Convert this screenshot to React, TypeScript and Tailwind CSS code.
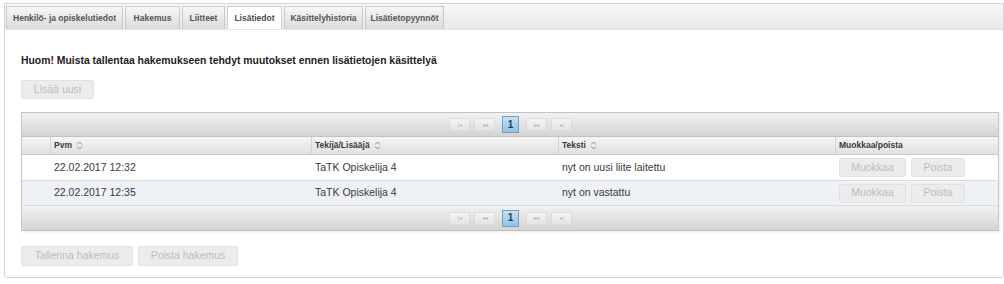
import React from "react";

const SortIcon = () => (
  <svg width="7" height="9" viewBox="0 0 7 9" className="inline-block ml-[4px] -mt-[1px] align-middle">
    <path d="M1 3.5 L3.5 1 L6 3.5" fill="none" stroke="#8a8a8a" strokeWidth="1" />
    <path d="M1 5.5 L3.5 8 L6 5.5" fill="none" stroke="#8a8a8a" strokeWidth="1" />
  </svg>
);

const PagerBtn = ({ label }: { label: string }) => (
  <div className="w-[21px] h-[13px] border border-[#dcdcdc] bg-gradient-to-b from-[#f4f4f4] to-[#e4e4e4] flex items-center justify-center text-[6px] leading-none text-[#bdbdbd] tracking-[-0.5px]">
    {label}
  </div>
);

const Pager = ({ border }: { border: string }) => (
  <div className={`h-[25px] bg-gradient-to-b from-[#f1f1f1] via-[#e3e3e3] to-[#d4d4d4] ${border} border-[#c2c2c2] flex items-center justify-center`}>
    <div className="flex items-center gap-[4px] ml-[1px]">
      <PagerBtn label="|◂" />
      <PagerBtn label="◂◂" />
      <div className="mx-[3px] w-[17px] h-[17px] border border-[#6f9fc4] bg-gradient-to-b from-[#c6e0f2] to-[#95c3e2] flex items-center justify-center text-[10px] font-bold text-[#1d3d5e] leading-none">
        1
      </div>
      <PagerBtn label="▸▸" />
      <PagerBtn label="▸|" />
    </div>
  </div>
);

const DisabledBtn = ({ label, w }: { label: string; w: string }) => (
  <div className={`${w} h-[19px] rounded-[2px] border border-[#e2e2e2] bg-[#ececec] text-[#bdbdbd] text-[10.5px] flex items-center justify-center`}>
    {label}
  </div>
);

const rows = [
  { pvm: "22.02.2017 12:32", tekija: "TaTK Opiskelija 4", teksti: "nyt on uusi liite laitettu", bg: "bg-white" },
  { pvm: "22.02.2017 12:35", tekija: "TaTK Opiskelija 4", teksti: "nyt on vastattu", bg: "bg-[#eef2f7]" },
];

const tabs = [
  { label: "Henkilö- ja opiskelutiedot", w: "w-[117px]" },
  { label: "Hakemus", w: "w-[55px]" },
  { label: "Liitteet", w: "w-[43px]" },
  { label: "Lisätiedot", w: "w-[55px]", active: true },
  { label: "Käsittelyhistoria", w: "w-[79px]" },
  { label: "Lisätietopyynnöt", w: "w-[79px]" },
];

export default function App() {
  return (
    <div className="w-[1004px] h-[284px] bg-white pt-[3px] pl-[4px] font-['Liberation_Sans',Arial,sans-serif] overflow-hidden">
      <div className="w-[1000px] h-[275px] border border-[#d2d2d2] rounded-b-[3px] flex flex-col">
        {/* tab bar */}
        <div className="h-[26px] bg-gradient-to-b from-[#f7f7f7] to-[#e9e9e9] border-b border-[#e4e4e4] flex items-end pl-[1px] gap-[2px]">
          {tabs.map((t) => (
            <div
              key={t.label}
              className={`${t.w} h-[23px] border border-b-0 ${
                t.active
                  ? "bg-white border-[#d0d0d0] text-[#4d4d4d]"
                  : "bg-gradient-to-b from-[#f7f7f7] to-[#dadada] border-[#c9c9c9] text-[#555]"
              } flex items-center justify-center text-[8.5px] font-bold whitespace-nowrap`}
            >
              {t.label}
            </div>
          ))}
        </div>

        <div className="pl-[16px] pr-[4px]">
          <div className="mt-[25px] h-[12px] text-[10.4px] leading-[12px] font-bold text-[#222] whitespace-nowrap">
            Huom! Muista tallentaa hakemukseen tehdyt muutokset ennen lisätietojen käsittelyä
          </div>
          <div className="mt-[13px]">
            <DisabledBtn label="Lisää uusi" w="w-[73px]" />
          </div>

          {/* table */}
          <div className="mt-[13px] w-[978px] border-x border-[#c8c8c8] shadow-[1px_1px_2px_rgba(0,0,0,0.08)]">
            <Pager border="border-y" />
            <div className="grid grid-cols-[29px_261px_247px_277px_1fr] h-[18px] bg-gradient-to-b from-[#f5f5f5] to-[#e1e1e1] border-b border-[#cbcbcb] text-[8.5px] font-bold text-[#3a3a3a]">
              <div className="border-r border-[#d2d2d2]" />
              <div className="border-r border-[#d2d2d2] flex items-center pl-[3px]">Pvm<SortIcon /></div>
              <div className="border-r border-[#d2d2d2] flex items-center pl-[3px]">Tekijä/Lisääjä<SortIcon /></div>
              <div className="border-r border-[#d2d2d2] flex items-center pl-[3px]">Teksti<SortIcon /></div>
              <div className="flex items-center pl-[3px]">Muokkaa/poista</div>
            </div>
            {rows.map((r, i) => (
              <div
                key={i}
                className={`grid grid-cols-[29px_261px_247px_277px_1fr] ${i === 0 ? "h-[26px]" : "h-[25px]"} ${r.bg} border-b border-[#dcdcdc] text-[10.5px] text-[#3a3a3a]`}
              >
                <div />
                <div className="flex items-center pl-[3px]">{r.pvm}</div>
                <div className="flex items-center pl-[3px]">{r.tekija}</div>
                <div className="flex items-center pl-[3px]">{r.teksti}</div>
                <div className="flex items-center pl-[3px] gap-[5px]">
                  <DisabledBtn label="Muokkaa" w="w-[67px]" />
                  <DisabledBtn label="Poista" w="w-[54px]" />
                </div>
              </div>
            ))}
            <Pager border="border-b" />
          </div>

          <div className="mt-[15px] flex gap-[5px]">
            <div className="w-[112px] h-[20px] rounded-[2px] border border-[#e2e2e2] bg-[#ececec] text-[#bdbdbd] text-[10.5px] flex items-center justify-center">
              Tallenna hakemus
            </div>
            <div className="w-[100px] h-[20px] rounded-[2px] border border-[#e2e2e2] bg-[#ececec] text-[#bdbdbd] text-[10.5px] flex items-center justify-center">
              Poista hakemus
            </div>
          </div>
        </div>
      </div>
    </div>
  );
}
